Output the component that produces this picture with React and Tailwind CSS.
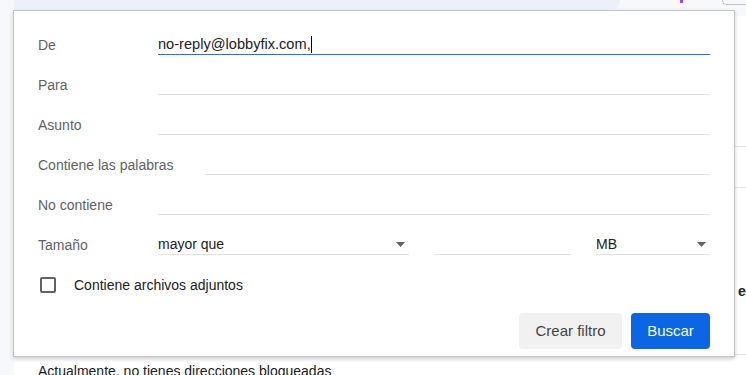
import React from "react";

const font = { fontFamily: "'Liberation Sans', Arial, sans-serif" };

const Caret = () => (
    <svg width="9" height="5" viewBox="0 0 9 5" className="shrink-0">
        <path d="M0 0h9L4.5 5z" fill="#5f6368" />
    </svg>
);

const Field = ({ label, value, focused, gapClass = "w-[120px]" }) => (
    <div className="flex items-center h-[40px]">
        <div className={`${gapClass} shrink-0 text-[14px] text-[#5f6368]`}>{label}</div>
        <div
            className={`flex-1 h-[20px] flex items-center text-[14.6px] text-[#202124] border-b ${
                focused ? "border-[#1a73e8]" : "border-[#e3e3e3]"
            }`}
        >
            {value}
            {focused && <span className="inline-block w-px h-[17px] bg-black" />}
        </div>
    </div>
);

const SelectBox = ({ value, className }) => (
    <div
        className={`${className} h-[20px] flex items-center justify-between pr-[4px] text-[14px] text-[#202124] border-b border-[#e3e3e3]`}
    >
        <span>{value}</span>
        <Caret />
    </div>
);

export default function App() {
    return (
        <div className="relative w-[746px] h-[375px] overflow-hidden bg-[#f6f8fc]" style={font}>
            {/* page behind */}
            <div className="flex items-start h-[16px]">
                <div className="ml-[14px] w-[606px] h-[10px] bg-[#eaf1fb] rounded-br-[8px]" />
                <div className="ml-[60px] w-[3px] h-[3px] bg-[#a142f4]" />
                <div className="ml-[39px] flex-1 h-[5px] border-l border-b border-[#c4c7c5] rounded-bl-[6px]" />
            </div>
            <div className="ml-[14px] h-[359px] bg-white flex flex-col">
                <div className="shrink-0 h-[131px] border-b border-[#e3e3e3] flex items-center pl-[708px] pt-[10px] text-[14px] text-[#444746]">
                    P
                </div>
                <div className="shrink-0 h-[41px] border-b border-[#e3e3e3]" />
                <div className="shrink-0 h-[167px] border-b border-[#e3e3e3] flex items-end pb-[52px] pl-[724px] text-[14px] font-bold text-[#202124]">
                    e
                </div>
                <div className="shrink-0 pl-[24px] pt-[6px] text-[14px] leading-[20px] text-[#202124] whitespace-nowrap">
                    Actualmente, no tienes direcciones bloqueadas
                </div>
            </div>

            {/* search options dialog */}
            <div className="absolute left-[13px] top-[10px] w-[722px] h-[347px] bg-white border border-[#c6c6c6] shadow-[0_2px_4px_rgba(0,0,0,0.2)] pt-[14px] px-[24px] flex flex-col">
                <Field label="De" value="no-reply@lobbyfix.com," focused />
                <Field label="Para" />
                <Field label="Asunto" />
                <Field label="Contiene las palabras" gapClass="pr-[32px]" />
                <Field label="No contiene" />
                <div className="flex items-center h-[40px]">
                    <div className="w-[120px] shrink-0 text-[14px] text-[#5f6368]">Tamaño</div>
                    <SelectBox value="mayor que" className="w-[251px]" />
                    <div className="ml-[25px] w-[137px] h-[20px] border-b border-[#e3e3e3]" />
                    <SelectBox value="MB" className="ml-[25px] flex-1" />
                </div>
                <div className="flex items-center h-[40px]">
                    <div className="ml-[2px] w-[16px] h-[16px] border-2 border-[#5f6368] rounded-[2px]" />
                    <span className="ml-[18px] text-[14px] text-[#202124]">Contiene archivos adjuntos</span>
                </div>
                <div className="flex justify-end gap-[9px] mt-[8px]">
                    <button className="w-[103px] h-[36px] rounded-[4px] bg-[#f1f1f1] text-[15px] text-[#444]">
                        Crear filtro
                    </button>
                    <button className="w-[79px] h-[36px] rounded-[4px] bg-[#0b66e4] text-[15px] text-white">
                        Buscar
                    </button>
                </div>
            </div>
        </div>
    );
}
